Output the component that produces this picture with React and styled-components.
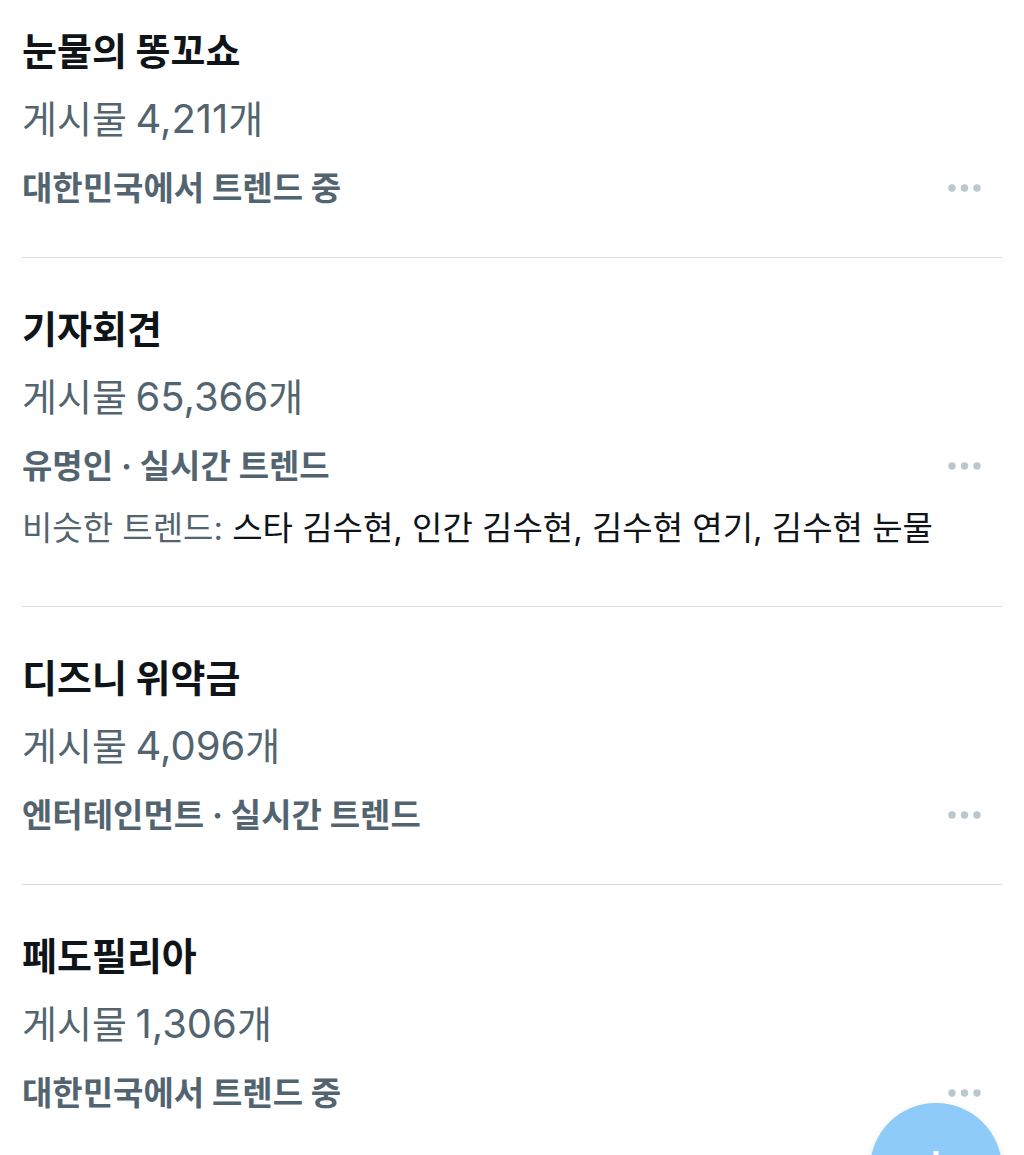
import React from "react";
import styled, { createGlobalStyle } from "styled-components";

const trends = [
  { name: "눈물의 똥꼬쇼", count: "4,211", context: "대한민국에서 트렌드 중" },
  {
    name: "기자회견",
    count: "65,366",
    context: "유명인 · 실시간 트렌드",
    related: ["스타 김수현", "인간 김수현", "김수현 연기", "김수현 눈물"],
  },
  { name: "디즈니 위약금", count: "4,096", context: "엔터테인먼트 · 실시간 트렌드" },
  { name: "페도필리아", count: "1,306", context: "대한민국에서 트렌드 중" },
];

function Trend({ trend }) {
  return (
    <TrendItem>
      <Title>{trend.name}</Title>
      <Count>
        게시물 <Digits>{trend.count}</Digits>개
      </Count>
      <ContextRow>
        <Context>{trend.context}</Context>
        <MoreButton type="button" aria-label="더 보기">
          <svg width="34" height="8" viewBox="0 0 34 8" fill="currentColor">
            <circle cx="4" cy="4" r="3.7" />
            <circle cx="16.5" cy="4" r="3.7" />
            <circle cx="29" cy="4" r="3.7" />
          </svg>
        </MoreButton>
      </ContextRow>
      {trend.related && (
        <Related>
          비슷한 트렌드: <strong>{trend.related.join(", ")}</strong>
        </Related>
      )}
    </TrendItem>
  );
}

function App() {
  return (
    <Page>
      <GlobalStyle />
      <TrendList>
        {trends.map((trend) => (
          <Trend key={trend.name} trend={trend} />
        ))}
      </TrendList>
      <ComposeButton type="button" aria-label="게시하기">
        <svg width="36" height="36" viewBox="0 0 36 36" stroke="currentColor" strokeWidth="5">
          <path d="M18 0v36M0 18h36" />
        </svg>
      </ComposeButton>
    </Page>
  );
}

const GlobalStyle = createGlobalStyle`
  * {
    box-sizing: border-box;
  }

  body {
    margin: 0;
    background: #fff;
    font-family: Inter, "Noto Sans CJK KR", sans-serif;
  }
`;

const Page = styled.main`
  padding: 0 22px;
`;

const TrendList = styled.ul`
  list-style: none;
  margin: 0;
  padding: 0;
`;

const TrendItem = styled.li`
  padding: 38px 0 35px;
  border-bottom: 1px solid #d9dcde;

  &:first-child {
    padding-top: 18px;
  }

  &:last-child {
    padding-bottom: 0;
    border-bottom: none;
  }
`;

const Title = styled.h2`
  margin: 0;
  color: #0f1419;
  font-family: "Noto Sans CJK KR", sans-serif;
  font-size: 38px;
  font-weight: 700;
  line-height: 62px;
`;

const Count = styled.p`
  margin: 0;
  color: #536471;
  font-family: "Noto Sans CJK KR", sans-serif;
  font-size: 38px;
  font-weight: 400;
  line-height: 74px;
`;

const Digits = styled.span`
  font-family: Inter, sans-serif;
  font-size: 40px;
  line-height: 1;
`;

const ContextRow = styled.div`
  display: flex;
  align-items: center;
  justify-content: space-between;
`;

const Context = styled.span`
  color: #536471;
  font-size: 33px;
  font-weight: 700;
  line-height: 68px;
`;

const MoreButton = styled.button`
  display: flex;
  margin-right: 16px;
  padding: 4px;
  border: none;
  background: none;
  color: #b9c7cf;
  cursor: pointer;
`;

const Related = styled.p`
  margin: 0 0 15px;
  color: #536471;
  font-size: 33px;
  line-height: 56px;

  strong {
    color: #0f1419;
    font-weight: 400;
  }
`;

/* floats over the end of the list and runs past the bottom edge */
const ComposeButton = styled.button`
  position: fixed;
  right: 22px;
  bottom: -80px;
  display: flex;
  align-items: center;
  justify-content: center;
  width: 132px;
  height: 132px;
  border: none;
  border-radius: 50%;
  background: #8ecbf8;
  color: #fff;
  box-shadow: 0 2px 6px rgba(0, 0, 0, 0.12);
  cursor: pointer;
`;

export default App;
